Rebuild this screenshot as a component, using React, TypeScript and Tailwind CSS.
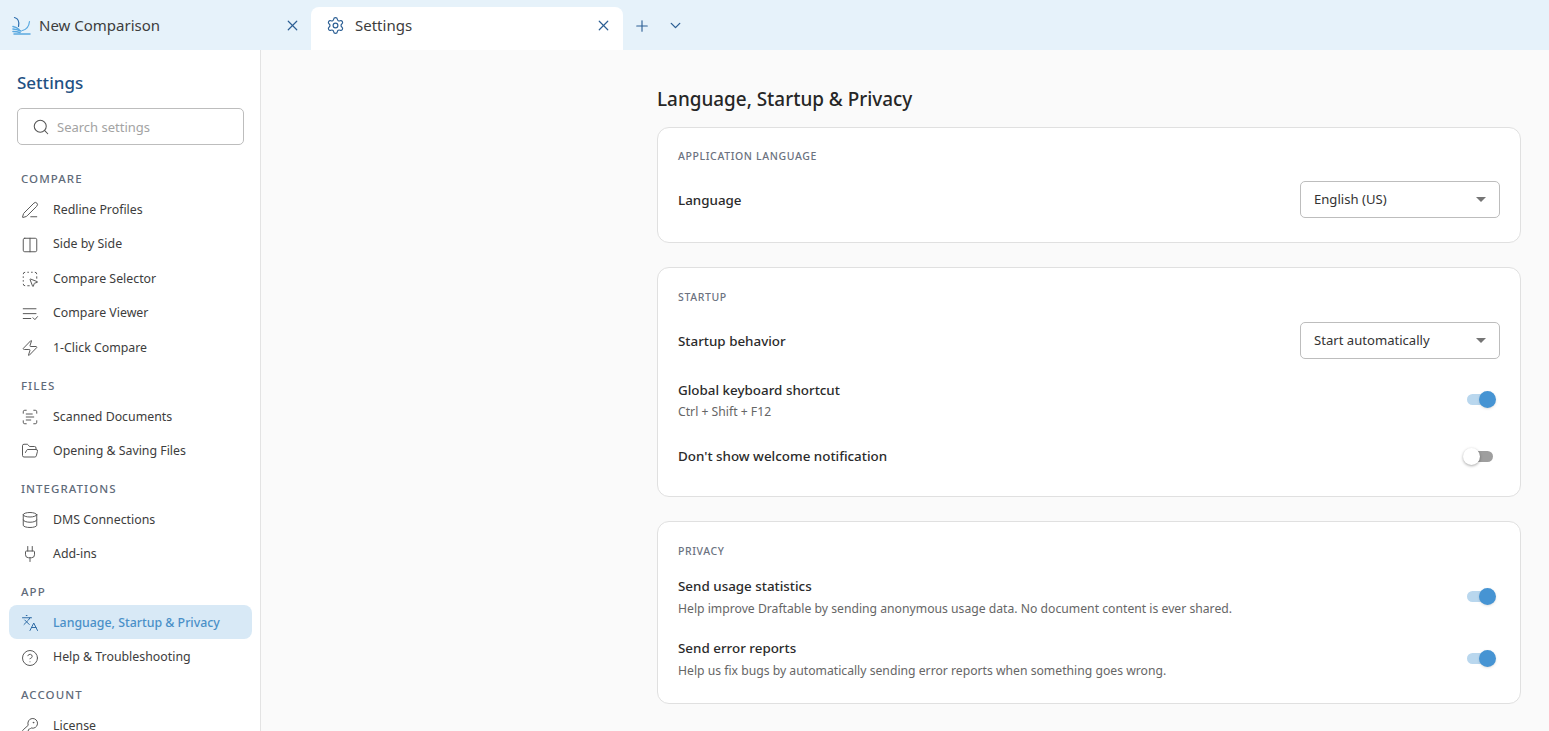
import React from "react";
import { PenLine, Columns2, SquareDashedMousePointer, Zap, ScanText, FolderOpen, Database, Plug, Languages, CircleHelp, KeyRound, Search, X, Settings, Plus, ChevronDown } from "lucide-react";

function ViewerIcon({ size = 18, strokeWidth = 1.3, className = "" }: { size?: number; strokeWidth?: number; className?: string }) {
  return (
    <svg width={size} height={size} viewBox="0 0 24 24" fill="none" stroke="currentColor" strokeWidth={strokeWidth} strokeLinecap="round" strokeLinejoin="round" className={className}>
      <path d="M3 5h17" />
      <path d="M3 11.5h17" />
      <path d="M3 18h10" />
      <path d="M16 17l2.5 2.5L22 15.5" />
    </svg>
  );
}

const groups = [
  { title: "COMPARE", items: [
    { label: "Redline Profiles", icon: PenLine },
    { label: "Side by Side", icon: Columns2 },
    { label: "Compare Selector", icon: SquareDashedMousePointer },
    { label: "Compare Viewer", icon: ViewerIcon },
    { label: "1-Click Compare", icon: Zap },
  ]},
  { title: "FILES", items: [
    { label: "Scanned Documents", icon: ScanText },
    { label: "Opening & Saving Files", icon: FolderOpen },
  ]},
  { title: "INTEGRATIONS", items: [
    { label: "DMS Connections", icon: Database },
    { label: "Add-ins", icon: Plug },
  ]},
  { title: "APP", items: [
    { label: "Language, Startup & Privacy", icon: Languages, active: true },
    { label: "Help & Troubleshooting", icon: CircleHelp },
  ]},
  { title: "ACCOUNT", items: [
    { label: "License", icon: KeyRound },
  ]},
];

function Logo() {
  return (
    <svg width="20" height="20" viewBox="0 0 20 20" fill="none" stroke="#5aa9e0" strokeWidth="1.2" strokeLinecap="round">
      <path d="M2.5 1.5c3.5 1 5 4.5 4 9" stroke="#2f6fae" />
      <path d="M17.5 5.5c-.5 4.5-3 8-7 9" />
      <path d="M1 10.5c2.5.5 4.5 1.5 6 3" strokeWidth="1.6" />
      <path d="M1 13c3 .2 5.5 1 8 2" strokeWidth="1.6" />
      <path d="M1 15.5c3 0 5 .3 7 1" strokeWidth="1.6" />
      <path d="M2 18h16" strokeWidth="1.5" />
    </svg>
  );
}

function Toggle({ on }: { on: boolean }) {
  return on ? (
    <div className="relative w-[29px] h-[20px] flex items-center">
      <div className="w-[26px] h-[11px] rounded-full bg-[#b9d7ee]" />
      <div className="absolute right-0 top-[1.5px] w-[17px] h-[17px] rounded-full bg-[#4694d3] shadow-sm" />
    </div>
  ) : (
    <div className="relative w-[30px] h-[20px] flex items-center justify-end">
      <div className="w-[26px] h-[11px] rounded-full bg-[#9e9e9e]" />
      <div className="absolute left-0 top-[1.5px] w-[17px] h-[17px] rounded-full bg-white shadow-[0_1px_3px_rgba(0,0,0,0.35)]" />
    </div>
  );
}

function Select({ value }: { value: string }) {
  return (
    <div className="w-[200px] h-[37px] rounded-[5px] border border-[#bdbdbd] bg-white flex items-center justify-between pl-[13px] pr-[13px] text-[13.1px] text-[#333]">
      <span className="pt-[1px]">{value}</span>
      <span className="w-0 h-0 border-l-[5px] border-r-[5px] border-t-[5px] border-l-transparent border-r-transparent border-t-[#757575]" />
    </div>
  );
}

function CardTitle({ children }: { children: React.ReactNode }) {
  return <div className="text-[10.5px] leading-[14px] tracking-[0.62px] font-medium text-[#6b7280]">{children}</div>;
}

function Label({ children }: { children: React.ReactNode }) {
  return <div className="text-[13.4px] leading-[20px] font-medium text-[#2b2b2b]">{children}</div>;
}

function Sub({ children }: { children: React.ReactNode }) {
  return <div className="text-[12.2px] leading-[18px] text-[#666]">{children}</div>;
}

export default function App() {
  return (
    <div className="w-[1549px] h-[731px] overflow-hidden flex flex-col bg-[#fafafa]" style={{ fontFamily: '"Noto Sans", sans-serif' }}>
      <div className="h-[50px] shrink-0 bg-[#e6f2fa] flex items-end">
        <div className="w-[311px] h-[43px] flex items-center pl-[12px] pr-[10px] pb-[6px]">
          <Logo />
          <span className="ml-[7px] text-[15px] text-[#3d3d3d]">New Comparison</span>
          <X className="ml-auto text-[#2c5f94]" size={17} strokeWidth={1.7} />
        </div>
        <div className="w-[312px] h-[43px] rounded-t-[8px] bg-white flex items-center pl-[15px] pr-[11px] pb-[6px]">
          <Settings size={19} strokeWidth={1.5} className="text-[#2c5f94]" />
          <span className="ml-[10px] text-[15px] text-[#3d3d3d]">Settings</span>
          <X className="ml-auto text-[#2c5f94]" size={17} strokeWidth={1.7} />
        </div>
        <div className="h-[43px] flex items-center pb-[6px]">
          <Plus className="ml-[10px] text-[#2c5f94]" size={18} strokeWidth={1.5} />
          <ChevronDown className="ml-[16px] text-[#2c5f94]" size={17} strokeWidth={1.9} />
        </div>
      </div>
      <div className="flex-1 min-h-0 flex">
        <aside className="w-[261px] shrink-0 bg-white border-r border-[#e3e3e3] overflow-hidden">
          <div className="pl-[17px] pt-[20px] text-[17px] leading-[25px] font-medium text-[#1f5184]">Settings</div>
          <div className="ml-[17px] mt-[13px] w-[227px] h-[37px] rounded-[5px] border border-[#bdbdbd] flex items-center pl-[14px] text-[13px] text-[#a3a3a3]">
            <Search size={18} strokeWidth={1.4} className="text-[#555]" />
            <span className="ml-[7px] pt-[2px]">Search settings</span>
          </div>
          <div className="mt-[24px]">
            {groups.map((g) => (
              <div key={g.title} className="mb-[11.1px]">
                <div className="pl-[21px] h-[20px] leading-[20px] text-[11.5px] tracking-[1.05px] font-medium text-[#5f6b7a]">{g.title}</div>
                <div className="mt-[3px]">
                  {g.items.map((it) => {
                    const I = it.icon;
                    return (
                      <div key={it.label} className={`ml-[9px] mr-[8px] h-[34.5px] rounded-[8px] flex items-center pl-[12px] pt-[2px] text-[12.35px] ${(it as any).active ? "bg-[#d8e9f6] text-[#4a90c8] font-medium" : "text-[#3d3d3d]"}`}>
                        <I size={18} strokeWidth={1.3} className={(it as any).active ? "text-[#2c6aa5]" : "text-[#555]"} />
                        <span className="ml-[14px]">{it.label}</span>
                      </div>
                    );
                  })}
                </div>
              </div>
            ))}
          </div>
        </aside>
        <main className="flex-1 min-w-0 pl-[396px] pr-[28px]">
          <h1 className="pt-[35px] text-[18.9px] leading-[28px] font-medium text-[#262626]">Language, Startup &amp; Privacy</h1>
          <div className="mt-[14px] flex flex-col gap-[24px]">
            <section className="h-[116px] rounded-[12px] border border-[#e0e0e0] bg-white px-[20px] pt-[21px]">
              <CardTitle>APPLICATION LANGUAGE</CardTitle>
              <div className="mt-[18px] flex items-center justify-between">
                <Label>Language</Label>
                <Select value="English (US)" />
              </div>
            </section>
            <section className="h-[230px] rounded-[12px] border border-[#e0e0e0] bg-white px-[20px] pt-[22px]">
              <CardTitle>STARTUP</CardTitle>
              <div className="mt-[18px] flex items-center justify-between">
                <Label>Startup behavior</Label>
                <Select value="Start automatically" />
              </div>
              <div className="mt-[16px] h-[50px] flex items-center justify-between">
                <div>
                  <Label>Global keyboard shortcut</Label>
                  <div className="mt-[3px]"><Sub>Ctrl + Shift + F12</Sub></div>
                </div>
                <div className="mr-[4px] mb-[2px]"><Toggle on /></div>
              </div>
              <div className="mt-[11px] h-[40px] flex items-center justify-between">
                <Label>Don't show welcome notification</Label>
                <div className="mr-[7px]"><Toggle on={false} /></div>
              </div>
            </section>
            <section className="h-[183px] rounded-[12px] border border-[#e0e0e0] bg-white px-[20px] pt-[22px]">
              <CardTitle>PRIVACY</CardTitle>
              <div className="mt-[18px] flex items-center justify-between">
                <div>
                  <Label>Send usage statistics</Label>
                  <div className="mt-[4px]"><Sub>Help improve Draftable by sending anonymous usage data. No document content is ever shared.</Sub></div>
                </div>
                <div className="mr-[4px] mb-[2px]"><Toggle on /></div>
              </div>
              <div className="mt-[20px] flex items-center justify-between">
                <div>
                  <Label>Send error reports</Label>
                  <div className="mt-[4px]"><Sub>Help us fix bugs by automatically sending error reports when something goes wrong.</Sub></div>
                </div>
                <div className="mr-[4px] mb-[2px]"><Toggle on /></div>
              </div>
            </section>
          </div>
        </main>
      </div>
    </div>
  );
}
